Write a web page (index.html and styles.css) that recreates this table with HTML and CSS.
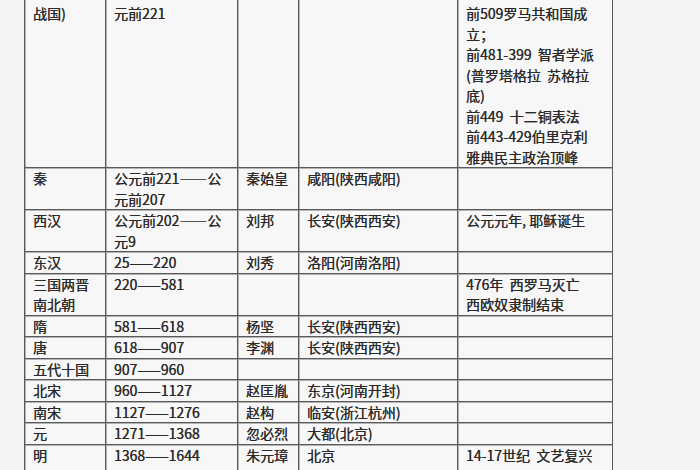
FILE: index.html
```html
<!DOCTYPE html>
<html lang="zh-CN">
<head>
<meta charset="utf-8">
<title>中国历史朝代表</title>
<link rel="stylesheet" href="styles.css">
</head>
<body>
<div class="page">
<table class="dynasty">
<colgroup>
<col class="c1"><col class="c2"><col class="c3"><col class="c4"><col class="c5">
</colgroup>
<tbody>
<tr class="first">
<td>战国)</td>
<td>元前221</td>
<td></td>
<td></td>
<td>前509罗马共和国成<br>立；<br>前481-399&nbsp;&nbsp;智者学派<br>(普罗塔格拉&nbsp;&nbsp;苏格拉<br>底)<br>前449&nbsp;&nbsp;十二铜表法<br>前443-429伯里克利<br>雅典民主政治顶峰</td>
</tr>
<tr>
<td>秦</td>
<td>公元前221——公<br>元前207</td>
<td>秦始皇</td>
<td>咸阳(陕西咸阳)</td>
<td></td>
</tr>
<tr>
<td>西汉</td>
<td>公元前202——公<br>元9</td>
<td>刘邦</td>
<td>长安(陕西西安)</td>
<td>公元元年, 耶稣诞生</td>
</tr>
<tr>
<td>东汉</td>
<td>25——220</td>
<td>刘秀</td>
<td>洛阳(河南洛阳)</td>
<td></td>
</tr>
<tr>
<td>三国两晋<br>南北朝</td>
<td>220——581</td>
<td></td>
<td></td>
<td>476年&nbsp;&nbsp;西罗马灭亡<br>西欧奴隶制结束</td>
</tr>
<tr>
<td>隋</td>
<td>581——618</td>
<td>杨坚</td>
<td>长安(陕西西安)</td>
<td></td>
</tr>
<tr>
<td>唐</td>
<td>618——907</td>
<td>李渊</td>
<td>长安(陕西西安)</td>
<td></td>
</tr>
<tr>
<td>五代十国</td>
<td>907——960</td>
<td></td>
<td></td>
<td></td>
</tr>
<tr>
<td>北宋</td>
<td>960——1127</td>
<td>赵匡胤</td>
<td>东京(河南开封)</td>
<td></td>
</tr>
<tr>
<td>南宋</td>
<td>1127——1276</td>
<td>赵构</td>
<td>临安(浙江杭州)</td>
<td></td>
</tr>
<tr>
<td>元</td>
<td>1271——1368</td>
<td>忽必烈</td>
<td>大都(北京)</td>
<td></td>
</tr>
<tr class="last">
<td>明</td>
<td>1368——1644</td>
<td>朱元璋</td>
<td>北京</td>
<td>14-17世纪&nbsp;&nbsp;文艺复兴</td>
</tr>
</tbody>
</table>
</div>
</body>
</html>
```
FILE: styles.css
```css
html, body {
  margin: 0;
  padding: 0;
  background: #f3f3f3;
  overflow: hidden;
}

.page {
  width: 700px;
  height: 470px;
  overflow: hidden;
}

.dynasty {
  margin: -2px 0 0 24px;
  border-collapse: collapse;
  table-layout: fixed;
  width: 589px;
  font-family: "Noto Sans CJK SC", "Noto Sans", sans-serif;
  font-size: 14px;
  line-height: 20.5px;
  color: #2a2a2a;
  background: #f7f7f7;
}

.c1 { width: 81px; }
.c2 { width: 132px; }
.c3 { width: 61px; }
.c4 { width: 159px; }
.c5 { width: 155px; }

.dynasty td {
  border: 1px solid #5a5a5a;
  padding: 0 2px 0 8px;
  vertical-align: top;
  white-space: nowrap;
  overflow: hidden;
  box-shadow: inset 1px 1px 0 #b4b4b4;
  text-shadow: 0.3px 0 0 #3a3a3a;
}

.dynasty .first td {
  padding-top: 4px;
}

.dynasty .last td {
  padding-bottom: 24px;
}
```
